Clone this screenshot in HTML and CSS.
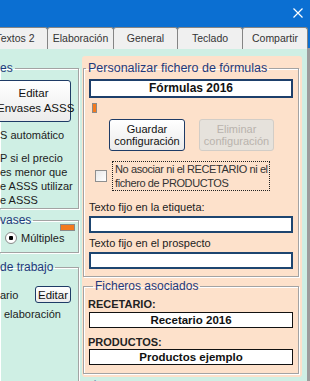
FILE: index.html
```html
<!DOCTYPE html>
<html>
  <head>
    <meta charset="utf-8">
    <link rel="stylesheet" href="styles.css">
  </head>
  <body>
    <div class="titlebar">
      <svg class="close" width="10" height="10" viewBox="0 0 10 10">
        <path d="M0.5 0.5 L9.5 9.5 M9.5 0.5 L0.5 9.5" stroke="#fff" stroke-width="1.2" fill="none"/>
      </svg>
    </div>
    <div class="tabs">
      <div class="tab tab-first">Textos 2</div>
      <div class="tab tab-2">Elaboración</div>
      <div class="tab tab-3">General</div>
      <div class="tab tab-4">Teclado</div>
      <div class="tab tab-5">Compartir</div>
    </div>

    <div class="main">
      <div class="left-col">
        <fieldset class="group side-group g-envases">
          <legend>es</legend>
          <button class="btn btn-big">Editar<br>Envases ASSS</button>
          <p class="text auto">S automático</p>
          <p class="text para">P si el precio<br>es menor que<br>e ASSS utilizar<br>e ASSS</p>
        </fieldset>
        <fieldset class="group side-group g-vases">
          <legend>vases</legend>
          <div class="swatch-row"><span class="swatch"></span></div>
          <div class="radio-row"><span class="radio"></span>Múltiples</div>
        </fieldset>
        <fieldset class="group side-group g-trabajo">
          <legend>de trabajo</legend>
          <div class="edit-row">
            <span>ario</span>
            <button class="btn btn-small">Editar</button>
          </div>
          <div class="text indent">elaboración</div>
        </fieldset>
      </div>

      <div class="right-col">
        <div class="panel">
          <fieldset class="group g-form">
            <legend>Personalizar fichero de fórmulas</legend>
            <div class="name-box">Fórmulas 2016</div>
            <div class="marker"></div>
            <div class="btn-row">
              <button class="btn btn-config">Guardar<br>configuración</button>
              <button class="btn btn-config btn-disabled">Eliminar<br>configuración</button>
            </div>
            <div class="check-row">
              <span class="checkbox"></span>
              <div class="check-label">No asociar ni el RECETARIO ni el<br>fichero de PRODUCTOS</div>
            </div>
            <div class="field-label first">Texto fijo en la etiqueta:</div>
            <div class="input"></div>
            <div class="field-label">Texto fijo en el prospecto</div>
            <div class="input"></div>
          </fieldset>
          <fieldset class="group g-files">
            <legend>Ficheros asociados</legend>
            <div class="file-label">RECETARIO:</div>
            <div class="file-box">Recetario 2016</div>
            <div class="file-label second">PRODUCTOS:</div>
            <div class="file-box">Productos ejemplo</div>
          </fieldset>
        </div>
        <div class="below-text">Última vista de fórmula</div>
      </div>
      <div class="edge"></div>
    </div>
  </body>
</html>
```

FILE: styles.css
```css
* {
  box-sizing: border-box;
}
body {
  margin: 0;
  width: 310px;
  height: 381px;
  overflow: hidden;
  background-color: #cfefe4;
  font-family: "Liberation Sans", Arial, sans-serif;
  font-size: 11px;
  color: #1c1c1c;
}

/* title bar + tabs */
.titlebar {
  height: 26px;
  background-color: #0b6fd2;
  position: relative;
}
.close {
  position: absolute;
  left: 293px;
  top: 8px;
}
.tabs {
  display: flex;
  height: 22px;
  background-color: #0b6fd2;
}
.tab {
  height: 22px;
  padding-top: 4px;
  margin-top: 1px;
  text-align: center;
  white-space: nowrap;
  font-size: 10.5px;
  color: #343434;
  background-color: #f0f0f0;
  border-top: 1px solid #858585;
  border-right: 1px solid #858585;
  border-left: 1px solid #858585;
  border-radius: 3px 3px 0 0;
  margin-right: -1px;
}
.tab-first {
  margin-left: -18px;
  width: 66px;
}
.tab-2 {
  width: 67px;
}
.tab-3 {
  width: 65px;
}
.tab-4 {
  width: 66px;
}
.tab-5 {
  width: 66px;
}

/* main area */
.main {
  display: flex;
  height: 333px;
  overflow: hidden;
}
.left-col {
  width: 80px;
  flex-shrink: 0;
  white-space: nowrap;
}
.right-col {
  width: 220px;
  margin-left: 2px;
  flex-shrink: 0;
}
.edge {
  width: 3px;
  margin-left: auto;
  background-color: #9c9c9c;
}

/* group boxes */
.group {
  margin: 0;
  min-width: 0;
  border: 1px solid #a3a3a3;
  box-shadow: inset 1px 1px 0 #fff, 1px 1px 0 #fff;
}
.group legend {
  padding: 0 2px;
  line-height: 14px;
  font-size: 12px;
  color: #1f3a7c;
}
.side-group {
  width: 79px;
  border-left: none;
  padding: 0;
}
.side-group legend {
  padding: 0 2px 0 0;
}
.text {
  margin: 0;
  line-height: 14px;
}

.g-envases {
  margin-top: 13px;
  padding: 5px 0 1px 0;
}
.btn {
  font-family: "Liberation Sans", Arial, sans-serif;
  font-size: 11px;
  color: #111;
  padding: 0;
  white-space: nowrap;
  border: 1px solid #1e3b66;
  border-radius: 3px;
  background: linear-gradient(#ffffff, #ebebeb);
}
.btn-big {
  display: block;
  margin-left: -4px;
  width: 75px;
  height: 42px;
  line-height: 15px;
  font-size: 11.5px;
}
.auto {
  margin-top: 6px;
}
.para {
  margin-top: 9px;
}

.g-vases {
  margin-top: 4px;
  padding: 0 0 7px 0;
}
.swatch-row {
  display: flex;
  justify-content: flex-end;
  margin-top: -3px;
  padding-right: 3px;
}
.swatch {
  width: 15px;
  height: 7px;
  background-color: #f47a1e;
  border: 1px solid #8a8a8a;
}
.radio-row {
  display: flex;
  align-items: center;
  gap: 4px;
  height: 14px;
  padding-left: 5px;
}
.radio {
  width: 12px;
  height: 12px;
  border: 1px solid #8a8a8a;
  border-radius: 50%;
  background: radial-gradient(circle, #000 0 2px, #fff 2.5px);
}

.g-trabajo {
  margin-top: 7px;
  padding: 12px 0 0 0;
  height: 130px;
}
.edit-row {
  display: flex;
  align-items: center;
  height: 17px;
}
.btn-small {
  margin-left: auto;
  margin-right: 7px;
  width: 36px;
  height: 17px;
  font-size: 11.5px;
}
.indent {
  margin-top: 4px;
  padding-left: 4px;
}

/* right panel */
.panel {
  margin-top: 8px;
  padding: 5px 3px 3px 1px;
  background-color: #fde1cb;
  border-radius: 3px;
}
.g-form {
  padding: 4px 5px 7px 5px;
}
.g-form legend {
  margin-left: -3px;
  font-size: 12.5px;
}
.name-box {
  height: 19px;
  line-height: 15px;
  text-align: center;
  font-weight: bold;
  font-size: 12px;
  color: #111;
  background-color: #fff;
  border: 2px solid #1d3f6b;
}
.marker {
  width: 5px;
  height: 10px;
  margin: 5px 0 0 3px;
  background-color: #f47a1e;
  border: 1px solid #8a8a8a;
}
.btn-row {
  display: flex;
  margin-top: 6px;
  padding-left: 20px;
  gap: 14px;
}
.btn-config {
  width: 76px;
  height: 32px;
  line-height: 12px;
}
.btn-disabled {
  width: 75px;
  color: #b9b3ad;
  background: #e6e2dc;
  border-color: #d2cdc7;
}
.check-row {
  display: flex;
  align-items: center;
  margin-top: 10px;
  padding-left: 6px;
}
.checkbox {
  width: 12px;
  height: 12px;
  border: 1px solid #8e8f8f;
  background: linear-gradient(135deg, #e8e8e8, #fff);
}
.check-label {
  margin-left: 5px;
  width: 158px;
  padding: 0 2px;
  line-height: 14px;
  white-space: nowrap;
  letter-spacing: -0.4px;
  color: #333;
  border: 1px dotted #222;
}
.field-label {
  margin-top: 3px;
  line-height: 14px;
  color: #222;
}
.field-label.first {
  margin-top: 9px;
}
.input {
  margin-top: 2px;
  height: 17px;
  background-color: #fff;
  border: 2px solid #1d4570;
}

.g-files {
  margin-top: 2px;
  padding: 4px 5px 8px 4px;
}
.g-files legend {
  margin-left: 5px;
}
.file-label {
  line-height: 14px;
  font-weight: bold;
  font-size: 11px;
  color: #222;
}
.file-label.second {
  margin-top: 7px;
}
.file-box {
  margin: 1px 0 0 1px;
  height: 16px;
  line-height: 14px;
  text-align: center;
  font-weight: bold;
  font-size: 11.5px;
  color: #111;
  background-color: #fff;
  border: 1px solid #111;
}
.file-label.second + .file-box {
  margin-top: 0;
}
.below-text {
  margin-top: 4px;
  padding-left: 8px;
  line-height: 14px;
  font-size: 12px;
  color: #1f3a7c;
}
```
